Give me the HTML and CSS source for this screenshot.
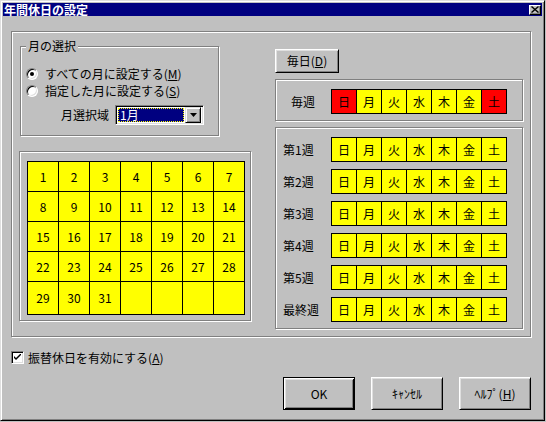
FILE: index.html
```html
<!DOCTYPE html>
<html lang="ja">
<head>
<meta charset="utf-8">
<title>年間休日の設定</title>
<link rel="stylesheet" href="styles.css">
</head>
<body>
<div class="window">
  <div class="titlebar">
    <span class="title">年間休日の設定</span>
    <span class="close"><svg width="8" height="7" viewBox="0 0 8 7"><path d="M0.5 0.5 L7.5 6.5 M7.5 0.5 L0.5 6.5" stroke="#000" stroke-width="1.4" fill="none"/></svg></span>
  </div>
  <div class="content">
    <div class="main-panel">
      <div class="left-col">
        <div class="group">
          <span class="legend">月の選択</span>
          <div class="radio-row"><span class="radio checked"></span><span>すべての月に設定する(<u>M</u>)</span></div>
          <div class="radio-row"><span class="radio"></span><span>指定した月に設定する(<u>S</u>)</span></div>
          <div class="combo-row">
            <span class="combo-label">月選択域</span>
            <div class="combo">
              <span class="combo-value">1月</span>
              <span class="combo-btn"><svg width="7" height="4" viewBox="0 0 7 4"><path d="M0 0 H7 L3.5 4 Z" fill="#000"/></svg></span>
            </div>
          </div>
        </div>
        <div class="cal-box">
          <div class="cal-grid">
            <span>1</span><span>2</span><span>3</span><span>4</span><span>5</span><span>6</span><span>7</span>
            <span>8</span><span>9</span><span>10</span><span>11</span><span>12</span><span>13</span><span>14</span>
            <span>15</span><span>16</span><span>17</span><span>18</span><span>19</span><span>20</span><span>21</span>
            <span>22</span><span>23</span><span>24</span><span>25</span><span>26</span><span>27</span><span>28</span>
            <span>29</span><span>30</span><span>31</span><span></span><span></span><span></span><span></span>
          </div>
        </div>
      </div>
      <div class="right-col">
        <button class="btn btn-daily">毎日(<u>D</u>)</button>
        <div class="box box-everyweek">
          <span class="week-label short">毎週</span>
          <div class="days"><span class="red">日</span><span>月</span><span>火</span><span>水</span><span>木</span><span>金</span><span class="red">土</span></div>
        </div>
        <div class="box box-weeks">
          <div class="week-row"><span class="week-label">第1週</span><div class="days"><span>日</span><span>月</span><span>火</span><span>水</span><span>木</span><span>金</span><span>土</span></div></div>
          <div class="week-row"><span class="week-label">第2週</span><div class="days"><span>日</span><span>月</span><span>火</span><span>水</span><span>木</span><span>金</span><span>土</span></div></div>
          <div class="week-row"><span class="week-label">第3週</span><div class="days"><span>日</span><span>月</span><span>火</span><span>水</span><span>木</span><span>金</span><span>土</span></div></div>
          <div class="week-row"><span class="week-label">第4週</span><div class="days"><span>日</span><span>月</span><span>火</span><span>水</span><span>木</span><span>金</span><span>土</span></div></div>
          <div class="week-row"><span class="week-label">第5週</span><div class="days"><span>日</span><span>月</span><span>火</span><span>水</span><span>木</span><span>金</span><span>土</span></div></div>
          <div class="week-row"><span class="week-label">最終週</span><div class="days"><span>日</span><span>月</span><span>火</span><span>水</span><span>木</span><span>金</span><span>土</span></div></div>
        </div>
      </div>
    </div>
    <div class="check-row">
      <span class="checkbox"><svg width="7" height="7" viewBox="0 0 7 7"><path d="M0 2 L0 4 L2 6 L7 1 L7 -1 L2 4 Z" fill="#000"/></svg></span>
      <span>振替休日を有効にする(<u>A</u>)</span>
    </div>
    <div class="button-row">
      <button class="btn btn-default">OK</button>
      <button class="btn btn-dialog">ｷｬﾝｾﾙ</button>
      <button class="btn btn-dialog">ﾍﾙﾌﾟ(<u>H</u>)</button>
    </div>
  </div>
</div>
</body>
</html>
```

FILE: styles.css
```css
* { box-sizing: border-box; }

body {
  margin: 0;
  background: #c0c0c0;
  font-family: "Noto Sans CJK JP", "Noto Sans", sans-serif;
  font-size: 12px;
  line-height: 14px;
  color: #000;
}

u { text-decoration: underline; text-underline-offset: 1px; }

.window {
  width: 545px;
  height: 421px;
  background: #c0c0c0;
  border: 1px solid;
  border-color: #dfdfdf #000 #000 #dfdfdf;
  box-shadow: inset 1px 1px 0 #fff, inset -1px -1px 0 #808080;
  padding: 2px;
  display: flex;
  flex-direction: column;
}

.titlebar {
  height: 13px;
  background: #000080;
  color: #fff;
  display: flex;
  align-items: center;
  justify-content: space-between;
  padding: 0 1px 0 1px;
}

.title {
  font-weight: bold;
  font-size: 12px;
  line-height: 13px;
  letter-spacing: 0;
}

.close {
  width: 12px;
  height: 10px;
  background: #c0c0c0;
  border: 1px solid;
  border-color: #fff #000 #000 #fff;
  box-shadow: inset -1px -1px 0 #808080;
  display: flex;
  align-items: center;
  justify-content: center;
}
.close svg { display: block; }

.content {
  padding: 15px 0 0 8px;
  display: flex;
  flex-direction: column;
}

.main-panel {
  width: 520px;
  height: 306px;
  border: 1px solid #808080;
  box-shadow: inset 1px 1px 0 #fff, 1px 1px 0 #fff;
  display: flex;
}

.left-col {
  width: 231px;
  margin: 14px 0 0 8px;
  display: flex;
  flex-direction: column;
}

.group {
  position: relative;
  width: 199px;
  height: 90px;
  border: 1px solid #808080;
  box-shadow: inset 1px 1px 0 #fff, 1px 1px 0 #fff;
  padding: 18px 0 0 5px;
}

.legend {
  position: absolute;
  top: -8px;
  left: 5px;
  padding: 0 2px;
  background: #c0c0c0;
  line-height: 14px;
}

.radio-row {
  height: 17px;
  display: flex;
  align-items: center;
  gap: 7px;
}

.radio {
  position: relative;
  width: 12px;
  height: 12px;
  border-radius: 50%;
  background: #fff;
  border: 1px solid;
  border-color: #808080 #fff #fff #808080;
  box-shadow: inset 1px 1px 0 #000, inset -1px -1px 0 #dfdfdf;
  flex: none;
}
.radio.checked::after {
  content: "";
  position: absolute;
  left: 3px;
  top: 3px;
  width: 4px;
  height: 4px;
  border-radius: 50%;
  background: #000;
}

.combo-row {
  margin-top: 6px;
  padding-left: 35px;
  display: flex;
  align-items: center;
  gap: 6px;
}

.combo-label { width: 48px; }

.combo {
  width: 89px;
  height: 20px;
  border: 1px solid;
  border-color: #808080 #fff #fff #808080;
  box-shadow: inset 1px 1px 0 #000, inset -1px -1px 0 #dfdfdf;
  background: #fff;
  padding: 2px 2px 2px 2px;
  display: flex;
  gap: 1px;
}

.combo-value {
  flex: 1;
  background: #000080;
  color: #fff;
  border: 1px dotted #ffff00;
  line-height: 12px;
  padding-left: 1px;
}

.combo-btn {
  width: 16px;
  height: 16px;
  margin: -1px 0 0 0;
  background: #c0c0c0;
  border: 1px solid;
  border-color: #dfdfdf #000 #000 #dfdfdf;
  box-shadow: inset 1px 1px 0 #fff, inset -1px -1px 0 #808080;
  display: flex;
  align-items: center;
  justify-content: center;
}
.combo-btn svg { display: block; }

.cal-box {
  width: 232px;
  height: 170px;
  margin: 15px 0 0 -1px;
  border: 1px solid #808080;
  box-shadow: inset 1px 1px 0 #fff, 1px 1px 0 #fff;
  padding: 9px 0 0 7px;
}

.cal-grid {
  display: grid;
  grid-template-columns: repeat(7, 30px);
  grid-template-rows: repeat(4, 29px) 32px;
  gap: 1px;
  background: #000;
  border: 1px solid #000;
  width: 218px;
}
.cal-grid span {
  background: #ffff00;
  display: flex;
  align-items: center;
  justify-content: center;
}

.right-col {
  margin: 17px 0 0 24px;
  width: 248px;
  display: flex;
  flex-direction: column;
  align-items: flex-start;
}

.btn {
  font-family: inherit;
  font-size: 12px;
  line-height: 14px;
  color: #000;
  background: #c0c0c0;
  border: 1px solid;
  border-color: #fff #000 #000 #fff;
  box-shadow: inset 1px 1px 0 #dfdfdf, inset -1px -1px 0 #808080;
  padding: 0;
  margin: 0;
}

.btn-daily {
  width: 64px;
  height: 24px;
}

.box {
  width: 248px;
  border: 1px solid #808080;
  box-shadow: inset 1px 1px 0 #fff, 1px 1px 0 #fff;
}

.box-everyweek {
  margin-top: 6px;
  height: 42px;
  display: flex;
  align-items: flex-start;
  padding: 9px 0 0 15px;
}

.week-label {
  width: 48px;
  line-height: 25px;
}
.week-label.short {
  width: 40px;
}

.days {
  display: grid;
  grid-template-columns: repeat(7, 24px);
  grid-auto-rows: 23px;
  gap: 1px;
  background: #000;
  border: 1px solid #000;
  width: 176px;
}
.days span {
  background: #ffff00;
  display: flex;
  align-items: center;
  justify-content: center;
}
.days span.red { background: #ff0000; }

.box-weeks {
  margin-top: 6px;
  height: 202px;
  padding: 9px 0 0 7px;
  display: flex;
  flex-direction: column;
  gap: 7px;
}

.week-row {
  display: flex;
  align-items: flex-start;
}

.check-row {
  margin-top: 14px;
  display: flex;
  align-items: center;
  gap: 4px;
  height: 13px;
}

.checkbox {
  width: 13px;
  height: 13px;
  background: #fff;
  border: 1px solid;
  border-color: #808080 #fff #fff #808080;
  box-shadow: inset 1px 1px 0 #000, inset -1px -1px 0 #dfdfdf;
  display: flex;
  align-items: center;
  justify-content: center;
}
.checkbox svg { display: block; }

.button-row {
  width: 520px;
  margin-top: 13px;
  display: flex;
  justify-content: flex-end;
  gap: 16px;
}

.btn-default,
.btn-dialog {
  width: 72px;
  height: 33px;
}

.btn-default {
  border: 1px solid #000;
  box-shadow: inset 1px 1px 0 #fff, inset -1px -1px 0 #000, inset 2px 2px 0 #dfdfdf, inset -2px -2px 0 #808080;
}
```
